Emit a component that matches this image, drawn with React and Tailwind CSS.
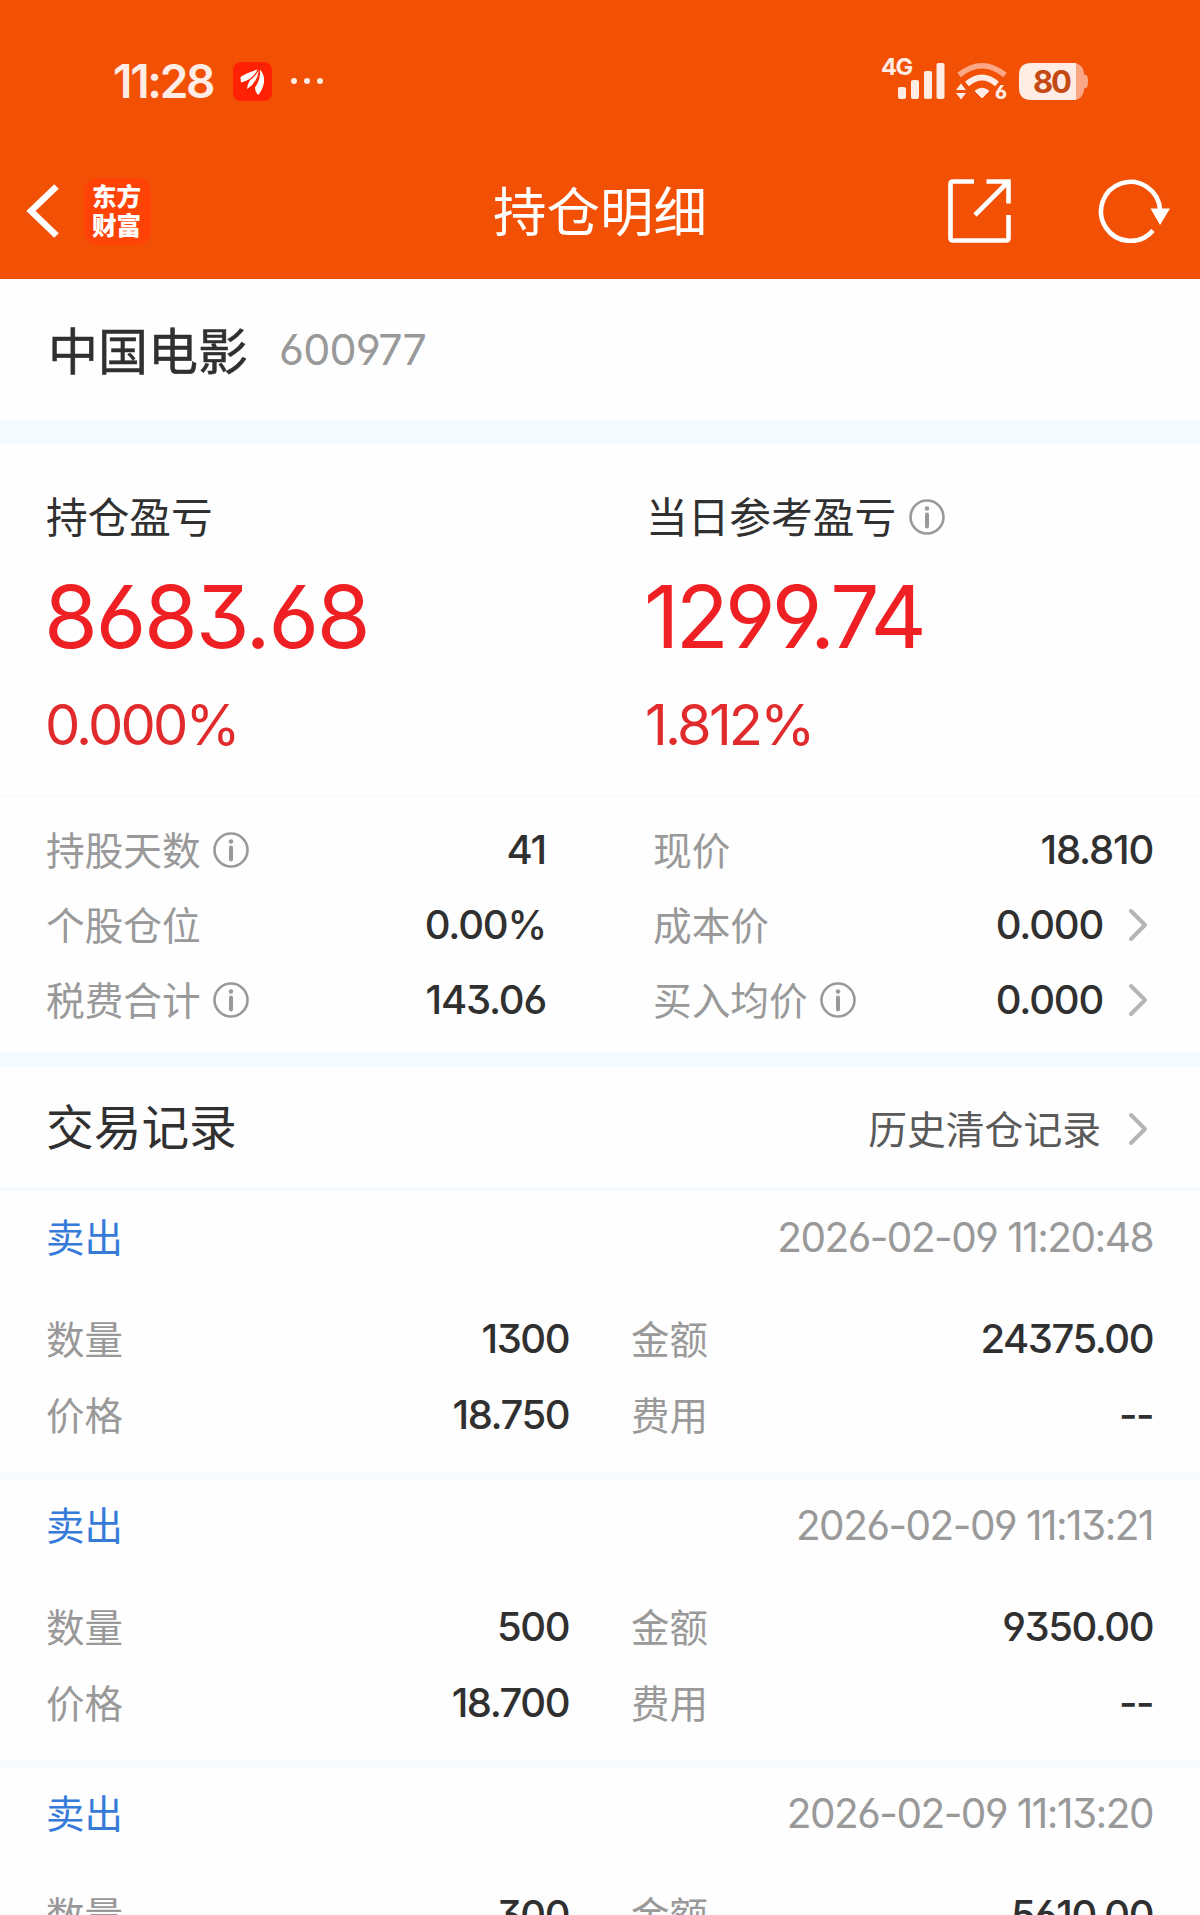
import clsx from "clsx";

const records = [
  { side: "卖出", time: "2026-02-09 11:20:48", qty: "1300", amount: "24375.00", price: "18.750", fee: "--" },
  { side: "卖出", time: "2026-02-09 11:13:21", qty: "500", amount: "9350.00", price: "18.700", fee: "--" },
  { side: "卖出", time: "2026-02-09 11:13:20", qty: "300", amount: "5610.00", price: "18.700", fee: "--" },
];

// digits: Inter with the open 6/9 and the flat-top 3
function Num({ className, children }) {
  return (
    <span className={clsx("block whitespace-pre leading-none font-['Inter',sans-serif] [font-feature-settings:'cv03','cv04','cv09']", className)}>
      {children}
    </span>
  );
}

function InfoIcon() {
  return (
    <svg width="36" height="36" viewBox="0 0 36 36" fill="none">
      <circle cx="18" cy="18" r="16.5" stroke="#999" strokeWidth="2.6" />
      <circle cx="18" cy="9.5" r="2.2" fill="#999" />
      <path d="M18 15.5v12" stroke="#999" strokeWidth="4" strokeLinecap="round" />
    </svg>
  );
}

function Chevron() {
  return (
    <svg width="20" height="34" viewBox="0 0 20 34" fill="none">
      <path d="M3 3l14 14L3 31" stroke="#b7b4b5" strokeWidth="4" strokeLinecap="round" strokeLinejoin="round" />
    </svg>
  );
}

function StatusBar() {
  return (
    <div className="h-[162px] flex items-center justify-between pl-[113px] pr-[111px]">
      <div className="flex items-center">
        <Num className="w-[120px] text-[46px] font-semibold tracking-[-0.05em] text-[#ffece5]">11:28</Num>
        <svg width="39" height="39" viewBox="0 0 39 39">
          <rect width="39" height="39" rx="8" fill="#ff2103" />
          <g fill="#fff">
            <path d="M7.5 15Q13 11 24.500 7.500Q22 18 8 20.500Z" />
            <path d="M14 27Q14 19 26 7.500Q27.500 19 14 27Z" />
            <path d="M25.500 33Q22 30 22 25.500Q28 17 27 7.500Q36 18 25.500 33Z" />
          </g>
          <path d="M9 21Q20 18 25.500 7.500M15 28Q25 20 26.500 7.500" stroke="#ff2103" strokeWidth="1.200" fill="none" />
        </svg>
        <div className="flex gap-[7px] ml-[19px]">
          <i className="size-[6px] rounded-full bg-[#ffece5]" />
          <i className="size-[6px] rounded-full bg-[#ffece5]" />
          <i className="size-[6px] rounded-full bg-[#ffece5]" />
        </div>
      </div>

      <div className="flex items-center">
        {/* SIGNAL */}
        <div className="relative w-[63px] h-[42px]">
          <Num className="absolute -left-[1px] -top-[5px] text-[23.500px] font-bold tracking-[-0.06em] text-[#ffece5]">4G</Num>
          <svg className="absolute left-[16px] top-[3px]" width="47" height="36" viewBox="0 0 47 36" fill="#ffece5">
            <rect x="0" y="24" width="8" height="12" rx="2" />
            <rect x="13" y="17" width="8" height="19" rx="2" />
            <rect x="26" y="8" width="8" height="28" rx="2" />
            <rect x="38.500" y="0" width="8" height="36" rx="2" />
          </svg>
        </div>
        {/* WIFI */}
        <div className="relative ml-[10px] w-[52px] h-[38px]">
          <svg width="52" height="38" viewBox="0 0 52 38" fill="none">
            <path d="M4 13Q27 -5.500 50 13" stroke="#fba684" strokeWidth="5.500" />
            <path d="M12 22Q27 9 42 22" stroke="#ffece5" strokeWidth="6" />
            <path d="M20 29Q27 23.500 34 29L27 36Z" fill="#ffece5" stroke="#ffece5" strokeLinejoin="round" />
            <path d="M6 21.500L11 28H1ZM6 37.500L11 31H1Z" fill="#ffece5" />
          </svg>
          <Num className="absolute left-[40px] top-[21px] text-[19px] font-extrabold text-[#ffece5]">6</Num>
        </div>
        {/* BATTERY */}
        <div className="relative ml-[12px] w-[70px] h-[37px]">
          <svg width="70" height="37" viewBox="0 0 70 37">
            <path d="M54 0H56Q64 1 65.500 12H67Q69 12 69 18.500T67 25H65.500Q64 36 56 37H54Z" fill="#fba684" />
            <path d="M12 0H57V37H12Q0 37 0 25V12Q0 0 12 0Z" fill="#ffece5" />
          </svg>
          <Num className="absolute left-[14px] top-[3px] text-[31px] font-bold tracking-[-0.07em] text-[#c34a12]">80</Num>
        </div>
      </div>
    </div>
  );
}

function NavBar() {
  return (
    <div className="flex items-center h-[98px] pl-[26px] pr-[29px]">
      <svg width="34" height="56" viewBox="0 0 34 56" fill="none">
        <path d="M30.500 3.500L5 28L30.500 52.500" stroke="#fff" strokeWidth="6.500" />
      </svg>
      <div className="ml-[24px] size-[67px] pb-[2px] pr-[2px] rounded-[14px] bg-[#ff4206] flex flex-col items-center justify-center text-white text-[24.500px] leading-[29px] font-black">
        <span>东方</span>
        <span>财富</span>
      </div>
      <h1 className="flex-1 pl-[342px] pb-[4px] text-[53.500px] leading-none text-white">持仓明细</h1>
      <svg width="64" height="64" viewBox="0 0 64 64" fill="none" stroke="#fff" strokeWidth="4.600">
        <path d="M26 2.500H5Q2.500 2.500 2.500 5V59Q2.500 61.500 5 61.500H58Q60.500 61.500 60.500 59V36" />
        <path d="M38.500 2.500H60.500V24.500M60 3L27 36" />
      </svg>
      <svg className="ml-[86px]" width="73" height="64" viewBox="0 0 73 64" fill="none">
        <path d="M55 51.500A29.500 29.500 0 1 1 62 31" stroke="#fff" strokeWidth="4.600" />
        <path d="M52.500 29.500H72L62 46Z" fill="#fff" />
      </svg>
    </div>
  );
}

function Profit({ label, info, value, valueClass, percent, className }) {
  return (
    <div className={className}>
      <div className="h-[50px] flex items-center gap-[13px] leading-none text-[#303030]">
        <span className="pb-[2px] text-[41.700px]">{label}</span>
        {info && <InfoIcon />}
      </div>
      <Num className={clsx("mt-[31px] -ml-[2px] text-[87px] text-[#ef2023]", valueClass)}>{value}</Num>
      <Num className="mt-[37px] -ml-[1px] text-[56px] tracking-[-0.050em] text-[#e12a2b]">{percent}</Num>
    </div>
  );
}

function Stat({ label, info, value, arrow }) {
  return (
    <div className="h-[75px] flex items-center">
      <span className="pb-[3px] text-[38.700px] leading-none text-[#999]">{label}</span>
      {info && <span className="ml-[12px]"><InfoIcon /></span>}
      <Num className="ml-auto pt-[1px] text-[40px] font-[460] tracking-[-0.03em] text-[#303030]">{value}</Num>
      {arrow && <span className="ml-[25px] mr-[5px]"><Chevron /></span>}
    </div>
  );
}

function Field({ label, value }) {
  return (
    <div className="h-[76px] flex items-center justify-between">
      <span className="pb-[2px] text-[38.500px] leading-none text-[#999]">{label}</span>
      <Num className="pt-[2px] text-[40px] font-[460] tracking-[-0.037em] text-[#303030]">{value}</Num>
    </div>
  );
}

function Record({ record }) {
  return (
    <div className="h-[288px] border-b-[7px] border-[#f6fbff]">
      <div className="h-[91px] border-b-2 border-[#fbfcfd] pl-[46px] pr-[47px] flex items-center justify-between">
        <span className="pb-[1px] text-[38.500px] leading-none text-[#367bd8]">{record.side}</span>
        <Num className="pt-[5px] text-[40.500px] tracking-[-0.037em] text-[#999]">{record.time}</Num>
      </div>
      <div className="pt-[18px] pl-[46px] pr-[47px] grid grid-cols-[523px_1fr] gap-x-[62px]">
        <Field label="数量" value={record.qty} />
        <Field label="金额" value={record.amount} />
        <Field label="价格" value={record.price} />
        <Field label="费用" value={record.fee} />
      </div>
    </div>
  );
}

export default function App() {
  return (
    <div className="w-[1200px] h-[1915px] overflow-hidden bg-[#fefefe] font-['Noto_Sans_CJK_SC',sans-serif]">
      <header className="h-[279px] bg-[#f25105]">
        <StatusBar />
        <NavBar />
      </header>

      {/* STOCK */}
      <div className="h-[141px] flex items-center pl-[48px]">
        <span className="pb-[4px] text-[50px] leading-none [-webkit-text-stroke:0.5px] text-[#303030]">中国电影</span>
        <Num className="ml-[31px] text-[43px] tracking-[-0.02em] text-[#999]">600977</Num>
      </div>
      <div className="h-[24px] bg-[#f4fbff]" />

      {/* PROFIT */}
      <div className="h-[353px] pt-[48px] flex border-b-2 border-[#f8fbfc]">
        <Profit className="w-[600px] pl-[46px]" label="持仓盈亏" value="8683.68" valueClass="tracking-[-0.025em]" percent="0.000%" />
        <Profit className="pl-[46px]" label="当日参考盈亏" info value="1299.74" valueClass="tracking-[-0.043em]" percent="1.812%" />
      </div>

      {/* STATS */}
      <div className="h-[255px] pt-[15px] pl-[46px] pr-[47px] grid grid-cols-[500px_1fr] gap-x-[107px] content-start">
        <Stat label="持股天数" info value="41" />
        <Stat label="现价" value="18.810" />
        <Stat label="个股仓位" value="0.00%" />
        <Stat label="成本价" value="0.000" arrow />
        <Stat label="税费合计" info value="143.06" />
        <Stat label="买入均价" info value="0.000" arrow />
      </div>
      <div className="h-[15px] bg-[#f4fbff]" />

      {/* RECORDS */}
      <div className="h-[124px] pl-[46px] pr-[47px] flex items-center border-b-4 border-[#f6fbff]">
        <h2 className="pb-[5px] text-[47.700px] leading-none text-[#303030]">交易记录</h2>
        <span className="ml-auto text-[38.800px] leading-none text-[#5a5a5a]">历史清仓记录</span>
        <span className="ml-[27px] mr-[5px] pt-[4px]"><Chevron /></span>
      </div>
      {records.map((r) => (
        <Record key={r.time} record={r} />
      ))}
    </div>
  );
}
